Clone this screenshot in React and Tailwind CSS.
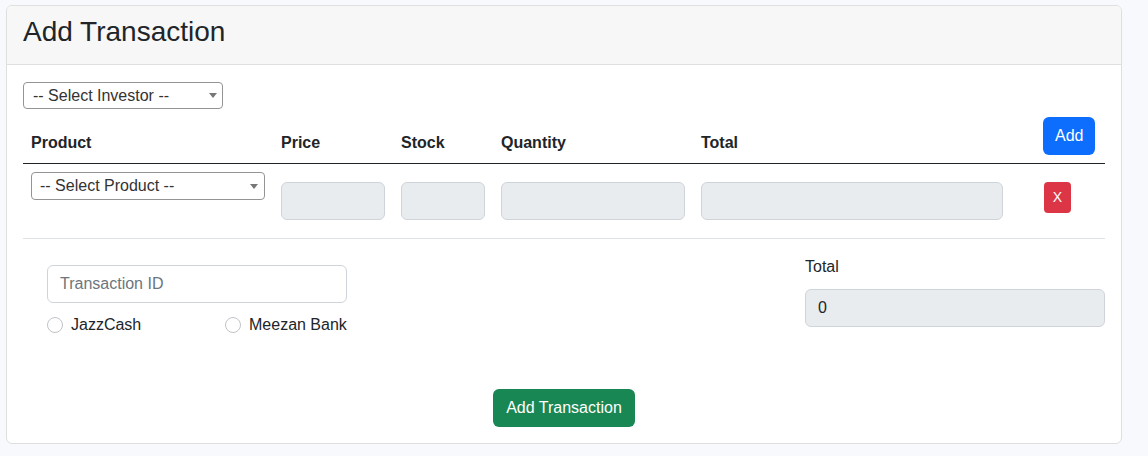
export default function App() {
  const inputRo =
    'block w-full h-[38px] mt-[10px] rounded-[6px] border border-[#ced4da] bg-[#e9ecef]';

  return (
    <div className="min-h-[456px] bg-[#f8f9fc] pl-[6px] pt-[5px] pr-[26px] font-['Liberation_Sans',Arial,sans-serif] text-[#212529]">
      <div className="w-[1116px] rounded-[6px] border border-[#dfdfdf] bg-white overflow-hidden">
        {/* Header */}
        <div className="h-[59px] flex items-center px-4 bg-[#f7f7f7] border-b border-[#dfdfdf]">
          <h3 className="text-[28px] leading-[1.2] pb-[7px]">Add Transaction</h3>
        </div>

        {/* Body */}
        <div className="px-4 pt-[17px] pb-4">
          <div className="relative w-[200px]">
            <select className="appearance-none w-full h-[27px] rounded-[4px] border border-[#949494] bg-white pl-[9px] pr-6 text-[16px] leading-none text-[#333]">
              <option>-- Select Investor --</option>
            </select>
            <span className="pointer-events-none absolute right-[6px] top-[11px] w-0 h-0 border-l-[4px] border-r-[4px] border-t-[5px] border-l-transparent border-r-transparent border-t-[#777]" />
          </div>

          {/* Product table */}
          <div className="w-[1082px]">
            <div className="grid grid-cols-[250px_120px_100px_200px_342px_1fr] items-end border-b border-[#212529] font-bold text-[16px] leading-6">
              <div className="p-2">Product</div>
              <div className="p-2">Price</div>
              <div className="p-2">Stock</div>
              <div className="p-2">Quantity</div>
              <div className="p-2">Total</div>
              <div className="p-2">
                <button className="h-[38px] px-3 rounded-[6px] bg-[#0d6efd] text-white font-normal text-[16px]">
                  Add
                </button>
              </div>
            </div>

            <div className="grid grid-cols-[250px_120px_100px_200px_342px_1fr] items-start h-[75px] border-b border-[#dee2e6]">
              <div className="p-2">
                <div className="relative w-[234px]">
                  <select className="appearance-none w-full h-[28px] rounded-[4px] border border-[#949494] bg-white pl-[8px] pr-6 text-[16px] leading-none text-[#333]">
                    <option>-- Select Product --</option>
                  </select>
                  <span className="pointer-events-none absolute right-[7px] top-[12px] w-0 h-0 border-l-[4px] border-r-[4px] border-t-[5px] border-l-transparent border-r-transparent border-t-[#777]" />
                </div>
              </div>
              <div className="p-2">
                <input readOnly className={inputRo} />
              </div>
              <div className="p-2">
                <input readOnly className={inputRo} />
              </div>
              <div className="p-2">
                <input readOnly className={inputRo} />
              </div>
              <div className="pl-2 pr-[32px] py-2">
                <input readOnly className={inputRo} />
              </div>
              <div className="py-2 pl-[9px]">
                <button className="mt-[10px] h-[31px] w-[27px] rounded-[4px] bg-[#dc3545] text-white text-[14px]">
                  X
                </button>
              </div>
            </div>

            {/* Payment + total */}
            <div className="flex items-start justify-between pl-6 pt-[15px]">
              <div className="mt-[11px] w-[300px]">
                <input
                  placeholder="Transaction ID"
                  className="block w-full h-[38px] rounded-[6px] border border-[#ced4da] px-3 text-[16px] placeholder:text-[#6c757d] outline-none"
                />
                <div className="flex mt-[10px] text-[16px] leading-6">
                  <label className="flex items-center gap-2 w-[178px]">
                    <span className="w-4 h-4 rounded-full border border-[#bfc4c9] bg-white" />
                    JazzCash
                  </label>
                  <label className="flex items-center gap-2">
                    <span className="w-4 h-4 rounded-full border border-[#bfc4c9] bg-white" />
                    Meezan Bank
                  </label>
                </div>
              </div>
              <div className="w-[300px] pt-px">
                <div className="text-[16px] leading-6 mb-[10px]">Total</div>
                <div className="h-[38px] flex items-center px-3 rounded-[6px] border border-[#ced4da] bg-[#e9ecef] text-[16px]">
                  0
                </div>
              </div>
            </div>

            <div className="flex justify-center mt-[52px]">
              <button className="h-[38px] w-[142px] rounded-[6px] bg-[#198754] text-white text-[16px]">
                Add Transaction
              </button>
            </div>
          </div>
        </div>
      </div>
    </div>
  );
}
